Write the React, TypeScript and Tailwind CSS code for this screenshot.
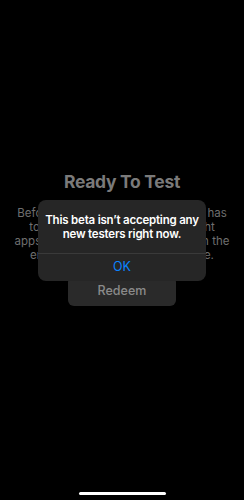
import React from 'react'

function App() {
  return (
    <div className="relative h-[500px] w-[244px] overflow-hidden bg-black font-['Inter',sans-serif]">
      <div className="flex flex-col items-center pt-[169px]">
        <h1 className="text-[17.5px] font-bold leading-[26px] tracking-[-0.3px] text-[#7a7a7a]">Ready To Test</h1>
        <p className="mt-[11px] text-center text-[11.5px] leading-[14px] text-[#6f6f6f]">
          Before you can test, the developer has<br />
          to invite you to test with TestFlight<br />
          apps. Look for the invitation code in the<br />
          email, or enter your redeem code.
        </p>
        <button className="mt-[14px] h-[30px] w-[108px] rounded-[6px] bg-[#2a2a2a] text-[12.5px] font-medium text-[#8a8a8a]">
          Redeem
        </button>
      </div>

      {/* alert */}
      <div className="absolute left-[38px] top-[200px] w-[168px] overflow-hidden rounded-[8px] bg-[#262626]">
        <p className="whitespace-nowrap pt-[13px] pb-[12px] text-center text-[11.5px] font-semibold leading-[14px] tracking-[-0.2px] text-white">
          This beta isn’t accepting any<br />
          new testers right now.
        </p>
        <div className="h-px bg-[#3a3a3a]" />
        <div className="flex h-[27px] items-center justify-center text-[12.5px] text-[#0a84ff]">OK</div>
      </div>

      <div className="absolute bottom-[5px] left-[79px] h-[3px] w-[87px] rounded-full bg-white" />
    </div>
  )
}

export default App
